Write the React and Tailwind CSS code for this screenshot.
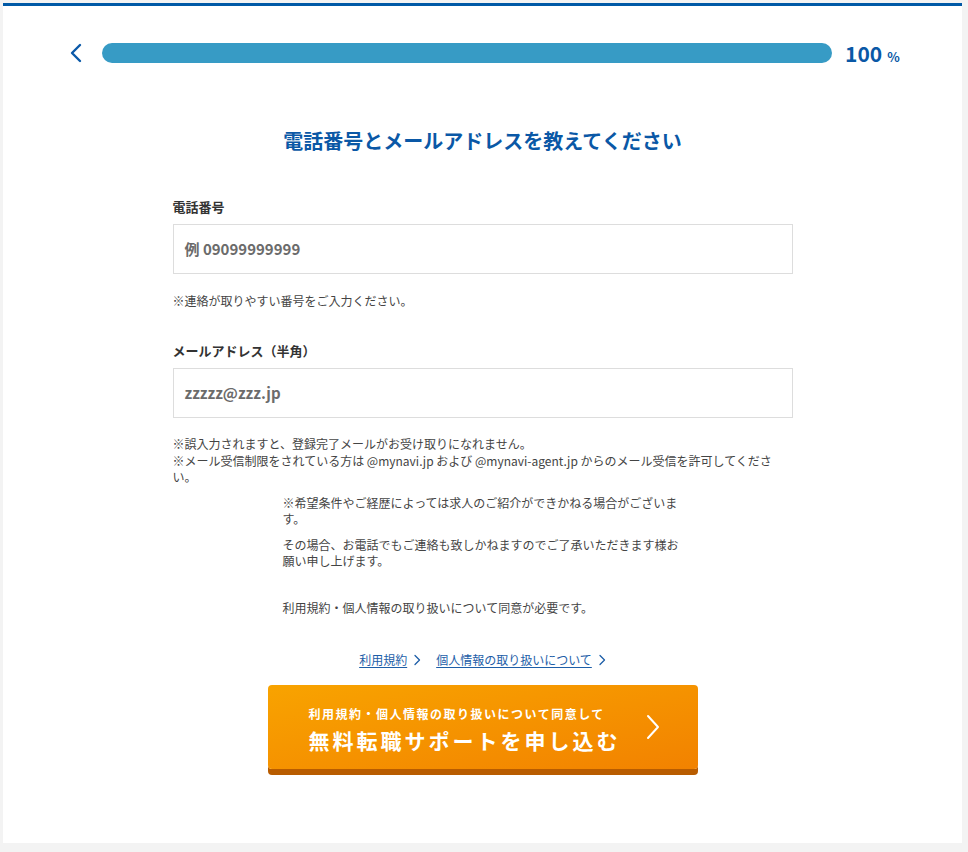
import React from "react";

const font = { fontFamily: '"Noto Sans CJK JP", "Noto Sans", sans-serif' };

function Chevron({ className, color = "currentColor", width = 2 }) {
  return (
    <svg viewBox="0 0 12 20" className={className} fill="none">
      <path d="M10 2 L2 10 L10 18" stroke={color} strokeWidth={width} strokeLinecap="round" strokeLinejoin="round" />
    </svg>
  );
}

function SmallRight({ className }) {
  return (
    <svg viewBox="0 0 8 12" className={className} fill="none">
      <path d="M2 1.5 L6.5 6 L2 10.5" stroke="#1d5ea8" strokeWidth="1.3" strokeLinecap="round" strokeLinejoin="round" />
    </svg>
  );
}

export default function App() {
  return (
    <div className="min-h-screen bg-[#f3f3f3] pl-[3px] pr-[6px] pt-[3px] pb-[9px]" style={font}>
      <div className="h-[840px] bg-white border-t-[3px] border-[#0059a6]">
        {/* progress */}
        <div className="flex items-center pl-[67px] mt-[37px] h-[20px]">
          <div className="w-[32px] flex items-center">
            <Chevron className="w-[12px] h-[20px] text-[#0a59a8]" width={2.4} />
          </div>
          <div className="w-[730px] h-[20px] rounded-full bg-[#379bc5]" />
          <div className="ml-[13px] flex items-baseline text-[#0a58a6] font-bold">
            <span className="text-[21px] leading-none">100</span>
            <span className="text-[13px] leading-none ml-[5px]">%</span>
          </div>
        </div>

        {/* title */}
        <h1 className="mt-[64px] text-center text-[20px] leading-[28px] font-bold text-[#0a58a6]">
          電話番号とメールアドレスを教えてください
        </h1>

        <div className="w-[620px] mx-auto">
          <div className="mt-[42px] text-[13px] leading-[20px] font-bold text-[#333]">電話番号</div>
          <div className="mt-[7px] h-[50px] border border-[#dddddd] flex items-center pl-[11px] text-[15px] font-bold text-[#6b6b6b]">
            例 09099999999
          </div>
          <p className="mt-[18px] text-[12px] leading-[17px] text-[#444]">※連絡が取りやすい番号をご入力ください。</p>

          <div className="mt-[32px] text-[13px] leading-[20px] font-bold text-[#333]">メールアドレス（半角）</div>
          <div className="mt-[7px] h-[50px] border border-[#dddddd] flex items-center pl-[11px] text-[15px] font-bold text-[#6b6b6b]">
            zzzzz@zzz.jp
          </div>
          <p className="mt-[18px] text-[12px] leading-[16.5px] text-[#444]">
            ※誤入力されますと、登録完了メールがお受け取りになれません。
            <br />
            ※メール受信制限をされている方は @mynavi.jp および @mynavi-agent.jp からのメール受信を許可してください。
          </p>
        </div>

        <div className="w-[400px] mx-auto text-[12px] leading-[16.5px] text-[#444]">
          <p className="mt-[9px]">※希望条件やご経歴によっては求人のご紹介ができかねる場合がございます。</p>
          <p className="mt-[9px]">その場合、お電話でもご連絡も致しかねますのでご了承いただきます様お願い申し上げます。</p>
          <p className="mt-[30px]">利用規約・個人情報の取り扱いについて同意が必要です。</p>
        </div>

        <div className="mt-[35px] flex justify-center items-center gap-[15px] text-[12px] leading-[17px] text-[#1d5ea8]">
          <span className="flex items-center gap-[6px]">
            <span className="underline underline-offset-2">利用規約</span>
            <SmallRight className="w-[8px] h-[12px]" />
          </span>
          <span className="flex items-center gap-[6px]">
            <span className="underline underline-offset-2">個人情報の取り扱いについて</span>
            <SmallRight className="w-[8px] h-[12px]" />
          </span>
        </div>

        <div className="mt-[17px] flex justify-center">
          <div className="w-[430px] h-[84px] rounded-[4px] bg-gradient-to-br from-[#f8a300] to-[#f28200] shadow-[0_6px_0_#b85c00] flex items-center pl-[41px] pr-[38px] pt-[5px] text-white">
            <div className="flex-1">
              <div className="text-[12px] leading-[16px] font-bold tracking-[1.5px]">利用規約・個人情報の取り扱いについて同意して</div>
              <div className="mt-[4px] text-[21px] leading-[28px] font-bold tracking-[3px]">無料転職サポートを申し込む</div>
            </div>
            <svg viewBox="0 0 14 26" className="w-[14px] h-[26px] -mt-[5px]" fill="none">
              <path d="M2 2 L12 13 L2 24" stroke="white" strokeWidth="2" strokeLinecap="round" strokeLinejoin="round" />
            </svg>
          </div>
        </div>
      </div>
    </div>
  );
}
